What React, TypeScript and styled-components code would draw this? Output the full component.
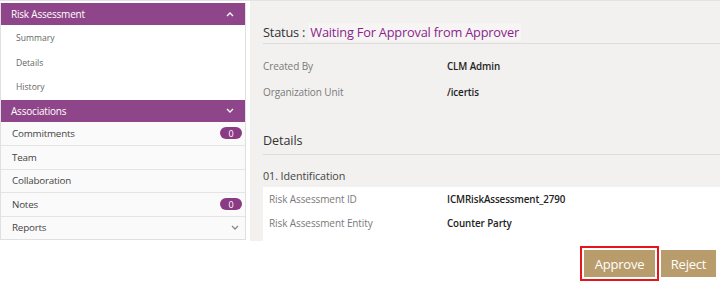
import React from 'react';
import styled, { createGlobalStyle } from 'styled-components';

const GlobalStyle = createGlobalStyle`
  html, body {
    margin: 0;
    padding: 0;
    background: #ffffff;
  }
  body {
    font-family: 'Open Sans', 'Noto Sans', sans-serif;
  }
`;

const purple = '#8f4589';

const Page = styled.div`
  display: flex;
  width: 720px;
  height: 291px;
  border-top: 1px solid #e2e2e2;
  box-sizing: border-box;
`;

const Sidebar = styled.nav`
  width: 246px;
  margin-top: 2px;
  align-self: flex-start;
  border: 1px solid #e0e0e0;
  border-top: none;
  box-sizing: border-box;
  background: #fafafa;
`;

const SectionHeader = styled.div`
  display: flex;
  align-items: center;
  justify-content: space-between;
  height: 22px;
  padding: 0 8px 0 10px;
  background: ${purple};
  color: #ffffff;
  font-size: 10px;
  letter-spacing: -0.2px;
`;

const SubList = styled.div`
  background: #ffffff;
  padding: 0 0 1px;
`;

const SubItem = styled.div`
  height: 24.5px;
  line-height: 26px;
  padding-left: 15px;
  font-size: 8.6px;
  color: #666666;
`;

const NavRow = styled.div<{ $first?: boolean }>`
  display: flex;
  align-items: center;
  justify-content: space-between;
  height: 23.5px;
  padding: 0 3px 0 11px;
  border-top: ${(p) => (p.$first ? 'none' : '1px solid #e4e4e4')};
  box-sizing: border-box;
  font-size: 9.8px;
  color: #444444;
  letter-spacing: -0.2px;
`;

const Badge = styled.span`
  display: inline-flex;
  align-items: center;
  justify-content: center;
  width: 22px;
  height: 12px;
  border-radius: 6px;
  background: #8a3b84;
  color: #ffffff;
  font-size: 9px;
`;

const Chevron = ({ up, color }: { up?: boolean; color: string }) => (
  <svg width="8" height="5" viewBox="0 0 8 5" style={{ marginRight: 3 }}>
    <polyline
      points={up ? '1,4 4,1 7,4' : '1,1 4,4 7,1'}
      fill="none"
      stroke={color}
      strokeWidth="1.3"
    />
  </svg>
);

const Main = styled.main`
  flex: 1;
  margin-left: 4px;
  display: flex;
  flex-direction: column;
`;

const Panel = styled.section`
  background: #f2f1f0;
  padding: 19px 0 0 13px;
  height: 240px;
  box-sizing: border-box;
`;

const StatusLine = styled.h2`
  margin: 0;
  height: 23px;
  display: flex;
  align-items: center;
  font-weight: 400;
  font-size: 12.8px;
  color: #333333;
  border-bottom: 1px solid #dcdcdc;
  letter-spacing: -0.2px;
`;

const StatusValue = styled.span`
  margin-left: 3px;
  padding: 0 2px;
  background: #f6f5f4;
  color: #8b1f8c;
  font-weight: 500;
`;

const FieldGroup = styled.div<{ $white?: boolean }>`
  display: flex;
  flex-direction: column;
  background: ${(p) => (p.$white ? '#ffffff' : 'transparent')};
  padding: ${(p) => (p.$white ? '0 0 6px 6px' : '9px 0 0 0')};
`;

const Field = styled.div<{ $h: number }>`
  display: flex;
  align-items: center;
  height: ${(p) => p.$h}px;
  font-size: 10px;
  letter-spacing: -0.1px;
`;

const Label = styled.span<{ $w: number }>`
  width: ${(p) => p.$w}px;
  color: #7a7a7a;
`;

const Value = styled.span`
  color: #222222;
  font-weight: 600;
  font-size: 9.8px;
`;

const SectionTitle = styled.h3`
  margin: 21px 0 0;
  height: 28px;
  display: flex;
  align-items: center;
  font-weight: 400;
  font-size: 12.6px;
  color: #333333;
  border-bottom: 1px solid #dcdcdc;
  letter-spacing: -0.1px;
`;

const SubTitle = styled.div`
  height: 32px;
  box-sizing: border-box;
  display: flex;
  align-items: center;
  padding-top: 8px;
  font-size: 10.8px;
  color: #444444;
  letter-spacing: -0.1px;
`;

const ButtonBar = styled.div`
  display: flex;
  justify-content: flex-end;
  align-items: center;
  gap: 2px;
  padding: 5px 4px 0 0;
`;

const Highlight = styled.div`
  border: 2px solid #e8141b;
  padding: 2px;
  display: flex;
`;

const ActionButton = styled.button<{ $w: number }>`
  width: ${(p) => p.$w}px;
  height: 27px;
  border: none;
  background: #b99c6b;
  color: #ffffff;
  font-family: inherit;
  font-size: 13px;
  padding: 0;
  letter-spacing: -0.2px;
`;

const navRows = [
  { name: 'Commitments', badge: '0' },
  { name: 'Team' },
  { name: 'Collaboration' },
  { name: 'Notes', badge: '0' },
  { name: 'Reports', chevron: true },
];

export default function App() {
  return (
    <>
      <GlobalStyle />
      <Page>
        <Sidebar>
          <SectionHeader>
            Risk Assessment
            <Chevron up color="#ffffff" />
          </SectionHeader>
          <SubList>
            <SubItem>Summary</SubItem>
            <SubItem>Details</SubItem>
            <SubItem>History</SubItem>
          </SubList>
          <SectionHeader>
            Associations
            <Chevron color="#ffffff" />
          </SectionHeader>
          {navRows.map((r, i) => (
            <NavRow key={r.name} $first={i === 0}>
              {r.name}
              {r.badge && <Badge>{r.badge}</Badge>}
              {r.chevron && <Chevron color="#888888" />}
            </NavRow>
          ))}
        </Sidebar>
        <Main>
          <Panel>
            <StatusLine>
              Status :<StatusValue>Waiting For Approval from Approver</StatusValue>
            </StatusLine>
            <FieldGroup>
              <Field $h={26}>
                <Label $w={184}>Created By</Label>
                <Value>CLM Admin</Value>
              </Field>
              <Field $h={26}>
                <Label $w={184}>Organization Unit</Label>
                <Value>/icertis</Value>
              </Field>
            </FieldGroup>
            <SectionTitle>Details</SectionTitle>
            <SubTitle>01. Identification</SubTitle>
            <FieldGroup $white>
              <Field $h={24}>
                <Label $w={178}>Risk Assessment ID</Label>
                <Value>ICMRiskAssessment_2790</Value>
              </Field>
              <Field $h={24}>
                <Label $w={178}>Risk Assessment Entity</Label>
                <Value>Counter Party</Value>
              </Field>
            </FieldGroup>
          </Panel>
          <ButtonBar>
            <Highlight>
              <ActionButton $w={71}>Approve</ActionButton>
            </Highlight>
            <ActionButton $w={55}>Reject</ActionButton>
          </ButtonBar>
        </Main>
      </Page>
    </>
  );
}
